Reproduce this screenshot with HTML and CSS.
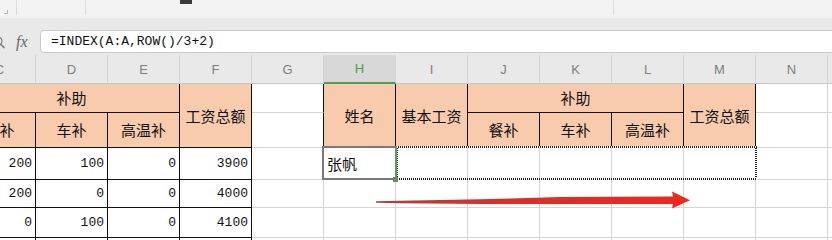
FILE: index.html
```html
<!DOCTYPE html>
<html lang="zh-CN">
<head>
    <meta charset="utf-8">
    <title>工资表 - 表格</title>
    <meta name="viewport" content="width=device-width, initial-scale=1">
    <link rel="stylesheet" href="styles.css">
</head>
<body>
    <div class="toolbar">
        <span class="launcher"></span>
        <span class="sep sep-a"></span>
        <span class="sep sep-b"></span>
        <span class="chip"></span>
        <span class="sep sep-c"></span>
    </div>

    <div class="formula-bar">
        <svg class="zoom-icon" width="10" height="14" viewBox="0 0 10 14">
            <circle cx="1" cy="5" r="4" fill="none" stroke="#7a7a7a" stroke-width="1.2"/>
            <path d="M3.5 8 L7.5 12" stroke="#7a7a7a" stroke-width="1.6"/>
        </svg>
        <span class="fx">fx</span>
        <div class="formula-input">=INDEX(A:A,ROW()/3+2)</div>
    </div>

    <div class="sheet">
        <table class="grid">
            <thead>
                <tr class="col-head">
                    <th>C</th><th>D</th><th>E</th><th>F</th><th>G</th>
                    <th class="on">H</th><th>I</th><th>J</th><th>K</th>
                    <th>L</th><th>M</th><th>N</th><th></th>
                </tr>
            </thead>
            <tbody>
                <tr class="r1">
                    <td class="hd bk" colspan="3">补助</td>
                    <td class="hd bk" rowspan="2">工资总额</td>
                    <td class="edge"></td>
                    <td class="hd bk" rowspan="2">姓名</td>
                    <td class="hd bk" rowspan="2">基本工资</td>
                    <td class="hd bk" colspan="3">补助</td>
                    <td class="hd bk" rowspan="2">工资总额</td>
                    <td></td>
                    <td></td>
                </tr>
                <tr class="r2">
                    <td class="hd bk">餐补</td>
                    <td class="hd bk">车补</td>
                    <td class="hd bk">高温补</td>
                    <td class="edge"></td>
                    <td class="hd bk">餐补</td>
                    <td class="hd bk">车补</td>
                    <td class="hd bk">高温补</td>
                    <td></td>
                    <td></td>
                </tr>
                <tr class="r3">
                    <td class="num bk">200</td>
                    <td class="num bk">100</td>
                    <td class="num bk">0</td>
                    <td class="num bk">3900</td>
                    <td></td>
                    <td class="name">张帆</td>
                    <td></td><td></td><td></td><td></td><td></td>
                    <td></td><td></td>
                </tr>
                <tr class="r4">
                    <td class="num bk">200</td>
                    <td class="num bk">0</td>
                    <td class="num bk">0</td>
                    <td class="num bk">4000</td>
                    <td></td><td></td><td></td><td></td><td></td>
                    <td></td><td></td><td></td><td></td>
                </tr>
                <tr class="r5">
                    <td class="num bk">0</td>
                    <td class="num bk">100</td>
                    <td class="num bk">0</td>
                    <td class="num bk">4100</td>
                    <td></td><td></td><td></td><td></td><td></td>
                    <td></td><td></td><td></td><td></td>
                </tr>
                <tr class="r6">
                    <td class="num bk"></td>
                    <td class="num bk"></td>
                    <td class="num bk"></td>
                    <td class="num bk"></td>
                    <td></td><td></td><td></td><td></td><td></td>
                    <td></td><td></td><td></td><td></td>
                </tr>
            </tbody>
        </table>

        <div class="copy-range"></div>
        <div class="active-cell"><span class="fill-handle"></span></div>

        <svg class="arrow" viewBox="370 185 325 30">
            <defs>
                <linearGradient id="arrowFill" x1="376" y1="0" x2="690" y2="0" gradientUnits="userSpaceOnUse">
                    <stop offset="0" stop-color="#a8423f"/>
                    <stop offset="0.3" stop-color="#d8302a"/>
                    <stop offset="1" stop-color="#f2261c"/>
                </linearGradient>
            </defs>
            <polygon fill="url(#arrowFill)"
                points="376,201.3 400,200.7 480,199.3 560,197 673,196.6 672,191.6 690,200.2 672,208.4 673,203.9 560,204 480,204 400,203.3 376,202.7"/>
        </svg>
    </div>
</body>
</html>
```

FILE: styles.css
```css
* {
    margin: 0;
    padding: 0;
    box-sizing: border-box;
}

body {
    width: 832px;
    height: 240px;
    overflow: hidden;
    background: #ffffff;
    font-family: "Noto Sans CJK SC", sans-serif;
    color: #111;
}

/* ribbon strip, cut at the top */
.toolbar {
    height: 18px;
    background: #f3f3f3;
    display: flex;
    align-items: flex-start;
}

.launcher {
    width: 4px;
    height: 4px;
    margin: 10px 0 0 4px;
    border-right: 1px solid #b8b8b8;
    border-bottom: 1px solid #b8b8b8;
}

.sep {
    width: 1px;
    height: 15px;
    background: #dcdcdc;
}

.sep-a { margin-left: 8px; }
.sep-b { margin-left: 68px; }
.sep-c { margin-left: 421px; }

.chip {
    width: 12px;
    height: 4px;
    margin-left: 94px;
    background: #3a3a3a;
}

/* formula bar */
.formula-bar {
    height: 37px;
    background: #e9e9e9;
    display: flex;
    align-items: flex-start;
    padding-top: 12px;
}

.zoom-icon {
    margin: 6px 0 0 -3px;
    flex: none;
}

.fx {
    font: italic 16px "Liberation Serif", serif;
    color: #666;
    margin: 2px 0 0 9px;
    line-height: 20px;
    width: 24px;
}

.formula-input {
    flex: 1;
    height: 23px;
    margin-right: -10px;
    background: #ffffff;
    border: 1px solid #c9c9c9;
    border-radius: 4px;
    padding-left: 10px;
    font: 13px "Liberation Mono", monospace;
    line-height: 21px;
    color: #111;
}

/* sheet */
.sheet {
    position: relative;
    height: 185px;
    overflow: hidden;
}

.grid {
    table-layout: fixed;
    width: 936px;
    border-collapse: separate;
    border-spacing: 0;
    margin-left: -36px;
}

.grid th,
.grid td {
    border-right: 1px solid #d5d5d5;
    border-bottom: 1px solid #d5d5d5;
    padding: 0;
    overflow: hidden;
    white-space: nowrap;
    font-weight: normal;
    line-height: 20px;
}

.col-head { height: 29px; }

.col-head th {
    background: #e9e9e9;
    color: #7f7f7f;
    font: 13px "Liberation Sans", Arial, sans-serif;
    border-bottom-color: #c6c6c6;
}

.col-head th.on {
    background: #d8d8d8;
    color: #4a9a4a;
    border-bottom: 2px solid #4f9d4f;
}

.r1 { height: 29px; }
.r2 { height: 35px; }
.r3 { height: 32px; }
.r4 { height: 28px; }
.r5 { height: 30px; }
.r6 { height: 30px; }

.grid td.hd {
    background: #f8cbad;
    text-align: center;
    font-size: 15px;
}

.grid td.bk {
    border-right-color: #111;
    border-bottom-color: #111;
}

.grid td.edge {
    border-right-color: #111;
}

.grid td.num {
    text-align: right;
    padding-right: 3px;
    font: 13px "Liberation Mono", monospace;
}

.grid td.name {
    padding-left: 3px;
    font-size: 15px;
}

/* copy marquee and active cell sit over the grid */
.copy-range {
    position: absolute;
    left: 396px;
    top: 91px;
    width: 361px;
    height: 34px;
    background:
        repeating-linear-gradient(90deg, #222 0 1px, #fff 1px 2px) top / 100% 2px no-repeat,
        repeating-linear-gradient(90deg, #fff 0 1px, #222 1px 2px) bottom / 100% 2px no-repeat,
        repeating-linear-gradient(#222 0 1px, #fff 1px 2px) right / 2px 100% no-repeat,
        repeating-linear-gradient(#222 0 1px, #fff 1px 2px) left / 2px 100% no-repeat;
}

.active-cell {
    position: absolute;
    left: 322px;
    top: 91px;
    width: 75px;
    height: 34px;
    border: 2px solid #7a7a7a;
    border-right-color: #55a155;
}

.fill-handle {
    position: absolute;
    right: -3px;
    bottom: -4px;
    width: 5px;
    height: 5px;
    background: #6e876e;
}

.arrow {
    position: absolute;
    left: 370px;
    top: 130px;
    width: 325px;
    height: 30px;
}
```
